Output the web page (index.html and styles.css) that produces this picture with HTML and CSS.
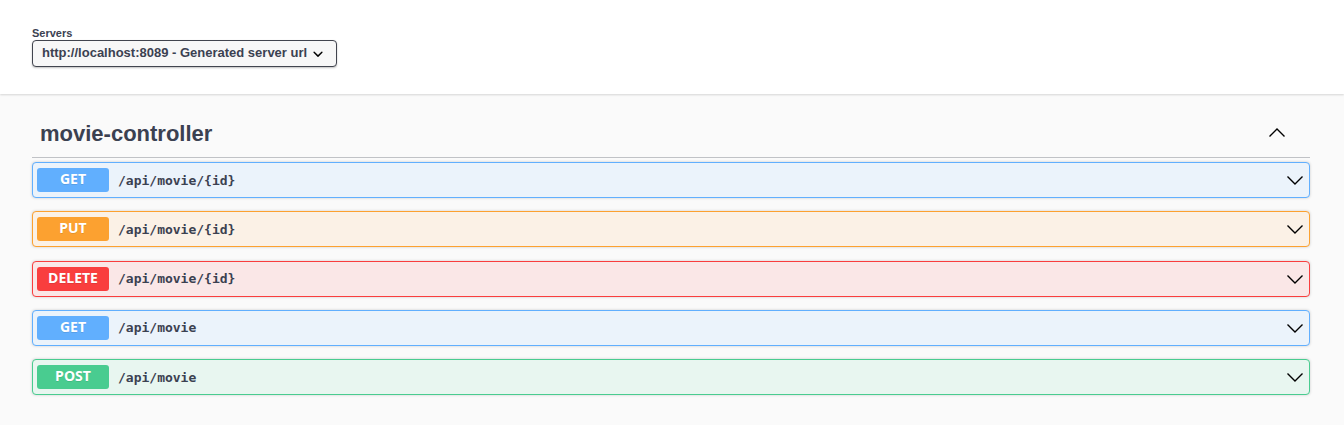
FILE: index.html
```html
<!DOCTYPE html>
<html lang="en">
<head>
<meta charset="utf-8">
<title>API documentation</title>
<link rel="stylesheet" href="styles.css">
</head>
<body>
<header class="scheme-container">
  <label class="servers-label" for="servers">Servers</label>
  <div class="select-wrap">
    <select id="servers" class="servers-select">
      <option>http://localhost:8089 - Generated server url</option>
    </select>
    <svg class="select-arrow" viewBox="0 0 20 20" aria-hidden="true"><path d="M13.418 7.859a.695.695 0 0 1 .978 0 .68.68 0 0 1 0 .969l-3.908 3.83a.697.697 0 0 1-.979 0l-3.908-3.83a.68.68 0 0 1 0-.969.695.695 0 0 1 .978 0L10 11z"/></svg>
  </div>
</header>
<main class="operations">
  <h2 class="tag">
    <span class="tag-name">movie-controller</span>
    <button class="toggle" type="button" aria-label="Collapse operations"><svg class="chevron" viewBox="0 0 20 20"><path d="M2.5 13.5 10 6l7.5 7.5"/></svg></button>
  </h2>
  <div class="list">
    <div class="op get"><span class="method">GET</span><span class="path">/api/movie/{id}</span><button class="toggle" type="button" aria-label="get /api/movie/{id}"><svg class="chevron" viewBox="0 0 20 20"><path d="M2.5 6.5 10 14l7.5-7.5"/></svg></button></div>
    <div class="op put"><span class="method">PUT</span><span class="path">/api/movie/{id}</span><button class="toggle" type="button" aria-label="put /api/movie/{id}"><svg class="chevron" viewBox="0 0 20 20"><path d="M2.5 6.5 10 14l7.5-7.5"/></svg></button></div>
    <div class="op delete"><span class="method">DELETE</span><span class="path">/api/movie/{id}</span><button class="toggle" type="button" aria-label="delete /api/movie/{id}"><svg class="chevron" viewBox="0 0 20 20"><path d="M2.5 6.5 10 14l7.5-7.5"/></svg></button></div>
    <div class="op get"><span class="method">GET</span><span class="path">/api/movie</span><button class="toggle" type="button" aria-label="get /api/movie"><svg class="chevron" viewBox="0 0 20 20"><path d="M2.5 6.5 10 14l7.5-7.5"/></svg></button></div>
    <div class="op post"><span class="method">POST</span><span class="path">/api/movie</span><button class="toggle" type="button" aria-label="post /api/movie"><svg class="chevron" viewBox="0 0 20 20"><path d="M2.5 6.5 10 14l7.5-7.5"/></svg></button></div>
  </div>
</main>
</body>
</html>
```
FILE: styles.css
```css
* { box-sizing: border-box; }
body {
  margin: 0;
  background: #fafafa;
  color: #3b4151;
  font-family: "Liberation Sans", Arial, sans-serif;
}
.scheme-container {
  padding: 27px 32px;
  background: #fff;
  box-shadow: 0 1px 2px rgba(0, 0, 0, .15);
}
.servers-label {
  display: block;
  font-size: 11px;
  line-height: 13px;
  font-weight: 700;
}
.select-wrap {
  position: relative;
  display: inline-block;
  vertical-align: top;
}
.servers-select {
  display: block;
  height: 27px;
  padding: 0 28px 2px 9px;
  border: 1px solid #41444e;
  border-radius: 4px;
  background: #f7f7f7;
  box-shadow: 0 1px 2px rgba(0, 0, 0, .25);
  color: #3b4151;
  font: 700 13px "Liberation Sans", Arial, sans-serif;
  appearance: none;
}
.select-arrow {
  position: absolute;
  top: 4px;
  right: 9px;
  width: 20px;
  height: 20px;
  pointer-events: none;
}
.operations { padding: 15px 34px 30px 32px; }
.tag {
  display: flex;
  align-items: center;
  height: 49px;
  margin: 0 0 4px;
  padding: 0 23px 0 8px;
  border-bottom: 1px solid rgba(59, 65, 81, .3);
  font-size: 22px;
}
.tag-name {
  flex: 1;
  padding-top: 1px;
}
.toggle {
  display: flex;
  padding: 0;
  border: 0;
  background: none;
}
.chevron {
  width: 20px;
  height: 20px;
  fill: none;
  stroke: #000;
  stroke-width: 1.4;
}
.list {
  display: grid;
  min-height: 233px;
  align-content: space-between;
}
.op {
  display: flex;
  align-items: center;
  height: 36px;
  padding: 0 4px;
  border: 1px solid;
  border-radius: 4px;
  box-shadow: 0 0 3px rgba(0, 0, 0, .19);
}
.method {
  width: 72px;
  padding-bottom: 2px;
  border-radius: 3px;
  color: #fff;
  font-family: "Open Sans", sans-serif;
  font-size: 14px;
  line-height: 22px;
  font-weight: 700;
  text-align: center;
  text-shadow: 0 1px 0 rgba(0, 0, 0, .1);
}
.path {
  flex: 1;
  padding-left: 9px;
  font: 700 13px "DejaVu Sans Mono", monospace;
}
.get { border-color: #61affe; background: #ebf3fb; }
.get .method { background: #61affe; }
.put { border-color: #fca130; background: #fbf1e6; }
.put .method { background: #fca130; }
.delete { border-color: #f93e3e; background: #fae7e7; }
.delete .method { background: #f93e3e; }
.post { border-color: #49cc90; background: #e8f6f0; }
.post .method { background: #49cc90; }
```
